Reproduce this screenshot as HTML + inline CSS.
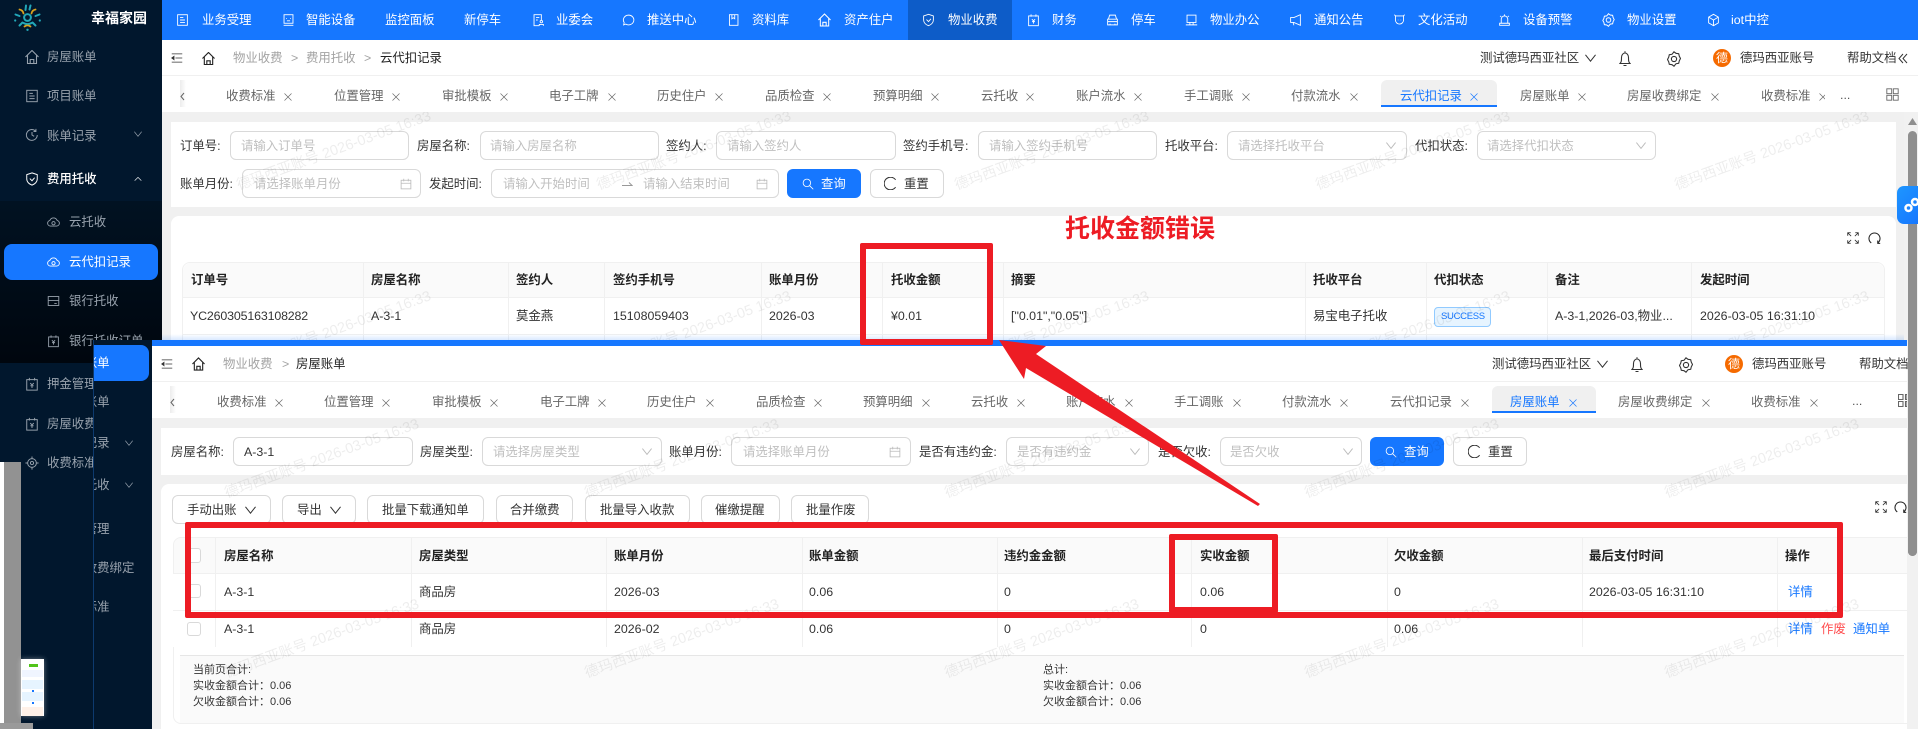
<!DOCTYPE html>
<html lang="zh"><head><meta charset="utf-8"><title>云代扣记录</title>
<style>
html,body{margin:0;padding:0;background:#fff;width:1918px;height:729px;overflow:hidden}
#r{position:relative;width:1918px;height:729px;overflow:hidden;background:#fff;font-family:"Liberation Sans","Noto Sans CJK SC",sans-serif;font-size:12.4px;color:#333}
i{position:absolute;font-style:normal;white-space:nowrap;line-height:16px}
.b{position:absolute;box-sizing:border-box}
.in{position:absolute;box-sizing:border-box;border:1px solid #d9d9d9;border-radius:6px;background:transparent;height:29px}
.bt{position:absolute;box-sizing:border-box;border:1px solid #d9d9d9;border-radius:6px;background:#fff;height:29px}
.pri{position:absolute;border-radius:6px;background:#1677ff;height:29px}
.ph i{color:#bfbfbf}
.h i{font-weight:700;color:#222}
.v{position:absolute;width:1px;background:#f0f0f0}
.ln{position:absolute;height:1px;background:#f0f0f0}
.red{position:absolute;box-sizing:border-box;border:6px solid #ed1c24;border-radius:2px}
.wm{position:absolute;white-space:nowrap;font-size:14.5px;line-height:18px;color:rgba(0,0,0,.07);transform:translate(-50%,-50%) rotate(-20deg)}
svg.ic{position:absolute;fill:none;stroke:currentColor;stroke-width:1.1;overflow:visible}
.g{color:#98a2ad}.g i{color:#98a2ad}
.tx{color:#666}.tx svg{width:8px;height:8px;color:#666;stroke-width:1.4}
.nv{color:#fff}.nv i{color:#fff}.nv svg{width:13px;height:14px;top:13px;color:#fff}
</style></head><body><div id="r">
<svg width="0" height="0" style="position:absolute"><defs>
<symbol id="home" viewBox="1 1 14 14"><path d="M1.500 8L8 1.500 14.500 8M3.500 6.500V14.500h9V6.500M6.200 14.500v-4h3.600v4"/></symbol>
<symbol id="menu" viewBox="0 1 16 14"><path d="M1 2.500h14M6 8h9M1 13.500h14"/><path d="M1 8l3-2.200v4.400z" fill="currentColor"/></symbol>
<symbol id="cal" viewBox="0 0 16 16"><rect x="1.500" y="3" width="13" height="11.500"/><path d="M1.500 7h13M5 1v3.500M11 1v3.500"/></symbol>
<symbol id="chev" viewBox="2 4.500 12 8"><path d="M2.500 5L8 12l5.500-7"/></symbol>
<symbol id="up" viewBox="2 5 12 7"><path d="M3 11l5-5 5 5"/></symbol>
<symbol id="x" viewBox="0 0 16 16"><path d="M1 1l14 14M15 1L1 15"/></symbol>
<symbol id="search" viewBox="0 0 16 16"><circle cx="6.500" cy="6.500" r="5"/><path d="M10.200 10.200L15 15"/></symbol>
<symbol id="reload" viewBox="1 1 14 14"><path d="M13.500 4A6.800 6.800 0 1 0 13.500 12"/></symbol>
<symbol id="bell" viewBox="2.500 .5 11 15"><path d="M3 13h10c-1.500-1.500-1.500-3-1.500-6a3.500 4.500 0 0 0-7 0c0 3 0 4.500-1.500 6zM8 .8v1.400M6.500 15h3"/></symbol>
<symbol id="gear" viewBox="1 0 14 16"><path d="M8 .8l2 1.500 2.700.4.600 2.500 1.200 2.300-1.200 2.300-.6 2.500-2.700.4L8 15.200l-2-1.500-2.700-.4-.6-2.500L1.500 8.500l1.200-2.300.6-2.500 2.700-.4z"/><circle cx="8" cy="8" r="2.600"/></symbol>
<symbol id="doc" viewBox="0 0 16 16"><rect x="2" y="1.500" width="12" height="13"/><path d="M5 5h4M5 8h6M5 11h6"/></symbol>
<symbol id="bill" viewBox="0 0 16 16"><rect x="2" y="3" width="12" height="12"/><path d="M5 1v3M11 1v3M6 7l2 2 2-2M8 9v3.500M6.200 10h3.600"/></symbol>
<symbol id="clock" viewBox="0 0 16 16"><path d="M14 8a6.200 6.200 0 1 1-2-4.600M8 4.500V8l2.500 1.500M12.500 1v3h-2.800"/></symbol>
<symbol id="shield" viewBox="0 0 16 16"><path d="M8 1l6 2v5c0 3.500-3 6-6 7-3-1-6-3.500-6-7V3zM5.500 7.500l2.500 2.500 3-3.500"/></symbol>
<symbol id="cloud" viewBox="0 0 16 16"><path d="M4 13a3.500 3.500 0 0 1-.5-6.900 4.800 4.800 0 0 1 9 0A3.500 3.500 0 0 1 12 13z"/><circle cx="8" cy="9.500" r="2"/></symbol>
<symbol id="card" viewBox="0 0 16 16"><rect x="1.500" y="2.500" width="13" height="11"/><path d="M1.500 7.500h13M9 11h3"/></symbol>
<symbol id="target" viewBox="0 0 16 16"><circle cx="8" cy="8" r="5"/><circle cx="8" cy="8" r="1.800"/><path d="M8 .5V3M8 13v2.500M.5 8H3M13 8h2.500"/></symbol>
<symbol id="face" viewBox="0 0 16 16"><rect x="2.500" y="1.500" width="11" height="10.500"/><path d="M5.500 5.500v1M10.500 5.500v1M6 9h4M2 14.500h12"/></symbol>
<symbol id="ppl" viewBox="0 0 16 16"><path d="M9 15H2.500V1.500h9V8M5 5h4M5 8h2"/><circle cx="11.500" cy="10" r="1.500"/><path d="M9 15v-1.500h5V15"/></symbol>
<symbol id="msg" viewBox="0 0 16 16"><path d="M8 2a6.500 6 0 1 1-3.500 11L2 14l.7-2.800A6.500 6 0 0 1 8 2z"/><path d="M5.500 8h0M8 8h0M10.500 8h0"/></symbol>
<symbol id="book" viewBox="0 0 16 16"><path d="M3 1.500h10.500v13H3zM6 1.500v5l1.800-1.200L9.500 6.500v-5"/></symbol>
<symbol id="car" viewBox="0 0 16 16"><path d="M3 7l1.500-5h7L13 7M2 7h12v7H2zM2 10h12M5 14v-1.500M11 14v-1.500"/></symbol>
<symbol id="pc" viewBox="0 0 16 16"><rect x="2.500" y="2" width="11" height="9"/><path d="M1 14h14M6 11v3M10 11v3"/></symbol>
<symbol id="horn" viewBox="0 0 16 16"><path d="M14 1.500v13L6 11H2V5h4zM5 11l1 3.500"/></symbol>
<symbol id="cup" viewBox="0 0 16 16"><path d="M3 3h10v5a5 5 0 0 1-10 0zM1.500 1.500l2 1.500M14.500 1.500l-2 1.500M6 8h.5M9.500 8h.5"/></symbol>
<symbol id="alarm" viewBox="0 0 16 16"><path d="M4 12V7a4 4 0 0 1 8 0v5M2 12h12v2.500H2zM8 1v1.500M2.500 3l1.500 1M13.500 3L12 4"/></symbol>
<symbol id="cube" viewBox="0 0 16 16"><path d="M8 1l6 3.500v7L8 15l-6-3.500v-7zM2 4.500L8 8l6-3.500M8 8v7"/></symbol>
<symbol id="grid" viewBox="0 0 16 16"><rect x="1" y="1" width="6" height="6"/><rect x="9" y="1" width="6" height="6"/><rect x="1" y="9" width="6" height="6"/><rect x="9" y="9" width="6" height="6"/></symbol>
<symbol id="exp" viewBox="0 0 16 16"><path d="M1 1l4.500 4.500M1 5V1h4M15 1l-4.500 4.500M15 5V1h-4M1 15l4.500-4.500M1 11v4h4M15 15l-4.500-4.500M15 11v4h-4"/></symbol>
<symbol id="rot" viewBox="0 0 16 16"><path d="M4 13.500a6.800 6.800 0 1 1 8 0M12 10.500v3.500h3"/></symbol>
</defs></svg>

<!-- TOP PAGE: sidebar -->
<div class="b" style="left:0;top:0;width:162px;height:729px;background:#01172d"></div>
<div class="b" style="left:0;top:201px;width:162px;height:162px;background:linear-gradient(#011222,#00060e)"></div>

<!-- left residue -->
<div class="b" style="left:0;top:462px;width:4px;height:262px;background:#fff"></div>
<div class="b" style="left:4px;top:462px;width:17px;height:267px;background:#929292"></div>
<div class="b" style="left:0;top:723px;width:33px;height:6px;background:#9a9a9a"></div>
<div class="b" style="left:21px;top:659px;width:23px;height:57px;background:#fff;box-shadow:0 0 5px rgba(255,255,255,.4)"></div>
<div class="b" style="left:29px;top:664px;width:9px;height:3px;background:#52c41a"></div>
<div class="b" style="left:22px;top:670px;width:21px;height:7px;background:#f0f5ff"></div>
<div class="b" style="left:22px;top:680px;width:21px;height:9px;background:#e6f4ff"></div>
<div class="b" style="left:22px;top:692px;width:21px;height:9px;background:#e6f4ff"></div>
<div class="b" style="left:22px;top:707px;width:21px;height:9px;background:#fff1e8"></div>
<div class="b" style="left:32px;top:690px;width:2px;height:2px;background:#1677ff"></div>
<div class="b" style="left:32px;top:702px;width:2px;height:2px;background:#1677ff"></div>

<svg style="position:absolute;left:14px;top:4px" width="27" height="27" viewBox="-13.500 -13.500 27 27" fill="none" stroke-linecap="round">
<circle r="3.400" stroke="#22a7b8" stroke-width="2"/>
<g stroke="#22a7b8" stroke-width="2"><path d="M-1.500-12L-2-7.500M3-12L2-8M-12-3l4 1.500M12-3l-4 1.500M-8 8l3-3M8 8l-3-3M-4 5.500a8 8 0 0 0 8 0"/></g>
<g stroke="#d8a21f" stroke-width="1.800"><path d="M-8-8a5 5 0 0 1 4 4M8-8a5 5 0 0 0-4 4M-3 9a5 5 0 0 1 6 0"/></g>
<circle cy="12.300" r="1.200" fill="#22a7b8"/><circle cx="-12.300" cy="3" r="1.100" fill="#22a7b8"/><circle cx="12.300" cy="3" r="1.100" fill="#22a7b8"/>
</svg>
<i style="left:91px;top:10px;font-size:14px;font-weight:700;color:#fff">幸福家园</i>
<div class="g">
<svg class="ic" style="left:25px;top:50px;width:14px;height:14px"><use href="#home"/></svg><i style="left:47px;top:49px">房屋账单</i>
<svg class="ic" style="left:25px;top:89px;width:14px;height:14px"><use href="#doc"/></svg><i style="left:47px;top:88px">项目账单</i>
<svg class="ic" style="left:25px;top:128px;width:14px;height:14px"><use href="#clock"/></svg><i style="left:47px;top:128px">账单记录</i>
<svg class="ic" style="left:134px;top:131px;width:8px;height:6px"><use href="#chev"/></svg>
<svg class="ic" style="left:47px;top:215px;width:13px;height:14px"><use href="#cloud"/></svg><i style="left:69px;top:214px">云托收</i>
<svg class="ic" style="left:47px;top:294px;width:13px;height:14px"><use href="#card"/></svg><i style="left:69px;top:293px">银行托收</i>
<svg class="ic" style="left:47px;top:334px;width:13px;height:14px"><use href="#bill"/></svg><i style="left:69px;top:333px">银行托收订单</i>
<svg class="ic" style="left:25px;top:377px;width:14px;height:14px"><use href="#bill"/></svg><i style="left:47px;top:376px">押金管理</i>
<svg class="ic" style="left:25px;top:417px;width:14px;height:14px"><use href="#bill"/></svg><i style="left:47px;top:416px">房屋收费绑定</i>
<svg class="ic" style="left:25px;top:456px;width:14px;height:14px"><use href="#target"/></svg><i style="left:47px;top:455px">收费标准</i>
</div>
<svg class="ic" style="left:25px;top:172px;width:14px;height:14px;color:#fff"><use href="#shield"/></svg><i style="left:47px;top:171px;color:#fff;font-weight:500">费用托收</i>
<svg class="ic" style="left:134px;top:176px;width:8px;height:6px;color:#dfe3e7"><use href="#up"/></svg>
<div class="b" style="left:4px;top:244px;width:154px;height:36px;background:#1677ff;border-radius:8px"></div>
<svg class="ic" style="left:47px;top:255px;width:13px;height:14px;color:#fff"><use href="#cloud"/></svg><i style="left:69px;top:254px;color:#fff">云代扣记录</i>

<!-- TOP nav -->
<div class="b" style="left:162px;top:0;width:1756px;height:40px;background:#1677ff"></div>
<div class="b" style="left:908px;top:0;width:104px;height:40px;background:#0d5cc8"></div>
<div class="nv">
<svg class="ic" style="left:176px"><use href="#doc"/></svg><i style="left:202px;top:12px">业务受理</i>
<svg class="ic" style="left:282px"><use href="#face"/></svg><i style="left:306px;top:12px">智能设备</i>
<i style="left:385px;top:12px">监控面板</i>
<i style="left:464px;top:12px">新停车</i>
<svg class="ic" style="left:532px"><use href="#ppl"/></svg><i style="left:556px;top:12px">业委会</i>
<svg class="ic" style="left:622px"><use href="#msg"/></svg><i style="left:647px;top:12px">推送中心</i>
<svg class="ic" style="left:727px"><use href="#book"/></svg><i style="left:752px;top:12px">资料库</i>
<svg class="ic" style="left:818px"><use href="#home"/></svg><i style="left:844px;top:12px">资产住户</i>
<svg class="ic" style="left:922px"><use href="#shield"/></svg><i style="left:948px;top:12px">物业收费</i>
<svg class="ic" style="left:1027px"><use href="#bill"/></svg><i style="left:1052px;top:12px">财务</i>
<svg class="ic" style="left:1106px"><use href="#car"/></svg><i style="left:1131px;top:12px">停车</i>
<svg class="ic" style="left:1185px"><use href="#pc"/></svg><i style="left:1210px;top:12px">物业办公</i>
<svg class="ic" style="left:1289px"><use href="#horn"/></svg><i style="left:1314px;top:12px">通知公告</i>
<svg class="ic" style="left:1393px"><use href="#cup"/></svg><i style="left:1418px;top:12px">文化活动</i>
<svg class="ic" style="left:1498px"><use href="#alarm"/></svg><i style="left:1523px;top:12px">设备预警</i>
<svg class="ic" style="left:1602px"><use href="#gear"/></svg><i style="left:1627px;top:12px">物业设置</i>
<svg class="ic" style="left:1707px"><use href="#cube"/></svg><i style="left:1731px;top:12px">iot中控</i>
</div>

<!-- TOP breadcrumb -->
<div class="ln" style="left:162px;top:75px;width:1756px"></div>
<svg class="ic" style="left:171px;top:52px;width:12px;height:12px;color:#333"><use href="#menu"/></svg>
<svg class="ic" style="left:202px;top:52px;width:13px;height:13px;color:#222;stroke-width:1.200"><use href="#home"/></svg>
<i style="left:233px;top:50px;color:#a3a3a3">物业收费</i><i style="left:291px;top:50px;color:#a3a3a3">&gt;</i><i style="left:306px;top:50px;color:#a3a3a3">费用托收</i><i style="left:364px;top:50px;color:#a3a3a3">&gt;</i><i style="left:380px;top:50px;color:#222">云代扣记录</i>
<i style="left:1480px;top:50px">测试德玛西亚社区</i>
<svg class="ic" style="left:1585px;top:54px;width:11px;height:8px;color:#333"><use href="#chev"/></svg>
<svg class="ic" style="left:1619px;top:51px;width:12px;height:15px;color:#333"><use href="#bell"/></svg>
<svg class="ic" style="left:1667px;top:51px;width:14px;height:16px;color:#333"><use href="#gear"/></svg>
<div class="b" style="left:1713px;top:49px;width:18px;height:18px;border-radius:50%;background:#f56a00"></div><i style="left:1716px;top:50px;color:#fff;font-size:12px">德</i>
<i style="left:1740px;top:50px">德玛西亚账号</i><i style="left:1847px;top:50px">帮助文档</i>
<svg style="position:absolute;left:1898px;top:53px" width="10" height="11" fill="none" stroke="#333"><path d="M5 1L1 5.500 5 10M9 1L5 5.500 9 10"/></svg>

<!-- TOP tabs -->
<div class="b" style="left:180px;top:80px;width:6px;height:27px;background:linear-gradient(90deg,#ececec,#fff)"></div>
<svg style="position:absolute;left:180px;top:92px" width="5" height="9" fill="none" stroke="#666"><path d="M4 1L1 4.500 4 8"/></svg>
<div class="b" style="left:1381px;top:80px;width:116px;height:27px;background:#f0f0f0;border-bottom:2px solid #1677ff;border-radius:6px 6px 0 0"></div>
<div class="tx">
<i style="left:226px;top:88px">收费标准</i><svg class="ic" style="left:284px;top:93px"><use href="#x"/></svg>
<i style="left:334px;top:88px">位置管理</i><svg class="ic" style="left:392px;top:93px"><use href="#x"/></svg>
<i style="left:442px;top:88px">审批模板</i><svg class="ic" style="left:500px;top:93px"><use href="#x"/></svg>
<i style="left:549px;top:88px">电子工牌</i><svg class="ic" style="left:608px;top:93px"><use href="#x"/></svg>
<i style="left:657px;top:88px">历史住户</i><svg class="ic" style="left:715px;top:93px"><use href="#x"/></svg>
<i style="left:765px;top:88px">品质检查</i><svg class="ic" style="left:823px;top:93px"><use href="#x"/></svg>
<i style="left:873px;top:88px">预算明细</i><svg class="ic" style="left:931px;top:93px"><use href="#x"/></svg>
<i style="left:981px;top:88px">云托收</i><svg class="ic" style="left:1026px;top:93px"><use href="#x"/></svg>
<i style="left:1076px;top:88px">账户流水</i><svg class="ic" style="left:1134px;top:93px"><use href="#x"/></svg>
<i style="left:1184px;top:88px">手工调账</i><svg class="ic" style="left:1242px;top:93px"><use href="#x"/></svg>
<i style="left:1291px;top:88px">付款流水</i><svg class="ic" style="left:1350px;top:93px"><use href="#x"/></svg>
<i style="left:1520px;top:88px">房屋账单</i><svg class="ic" style="left:1578px;top:93px"><use href="#x"/></svg>
<i style="left:1627px;top:88px">房屋收费绑定</i><svg class="ic" style="left:1711px;top:93px"><use href="#x"/></svg>
<i style="left:1761px;top:88px">收费标准</i><svg class="ic" style="left:1819px;top:93px"><use href="#x"/></svg>
</div>
<i style="left:1400px;top:88px;color:#1677ff">云代扣记录</i><svg class="ic" style="left:1470px;top:93px;width:8px;height:8px;color:#1677ff;stroke-width:1.400"><use href="#x"/></svg>
<div class="b" style="left:1825px;top:76px;width:93px;height:36px;background:#fff"></div>
<i style="left:1840px;top:87px;color:#555">...</i>
<svg class="ic" style="left:1886px;top:88px;width:13px;height:13px;color:#666"><use href="#grid"/></svg>

<!-- TOP content -->
<div class="b" style="left:162px;top:112px;width:1756px;height:228px;background:#f0f0f0"></div>
<div class="b" style="left:171px;top:122px;width:1725px;height:85px;background:#fff"></div>
<div class="b" style="left:171px;top:216px;width:1725px;height:124px;background:#fff;border-radius:8px 8px 0 0"></div>
<i style="left:180px;top:138px">订单号:</i><div class="in" style="left:230px;top:131px;width:179px"></div>
<i style="left:417px;top:138px">房屋名称:</i><div class="in" style="left:480px;top:131px;width:179px"></div>
<i style="left:666px;top:138px">签约人:</i><div class="in" style="left:716px;top:131px;width:180px"></div>
<i style="left:903px;top:138px">签约手机号:</i><div class="in" style="left:978px;top:131px;width:179px"></div>
<i style="left:1165px;top:138px">托收平台:</i><div class="in" style="left:1227px;top:131px;width:180px"></div>
<i style="left:1415px;top:138px">代扣状态:</i><div class="in" style="left:1477px;top:131px;width:179px"></div>
<i style="left:180px;top:176px">账单月份:</i><div class="in" style="left:242px;top:169px;width:179px"></div>
<i style="left:429px;top:176px">发起时间:</i><div class="in" style="left:491px;top:169px;width:288px"></div>
<div class="ph">
<i style="left:241px;top:138px">请输入订单号</i><i style="left:490px;top:138px">请输入房屋名称</i><i style="left:727px;top:138px">请输入签约人</i><i style="left:989px;top:138px">请输入签约手机号</i><i style="left:1238px;top:138px">请选择托收平台</i><i style="left:1487px;top:138px">请选择代扣状态</i>
<i style="left:254px;top:176px">请选择账单月份</i><i style="left:503px;top:176px">请输入开始时间</i><i style="left:643px;top:176px">请输入结束时间</i>
</div>
<svg class="ic" style="left:1386px;top:142px;width:10px;height:7px;color:#bbb"><use href="#chev"/></svg>
<svg class="ic" style="left:1636px;top:142px;width:10px;height:7px;color:#bbb"><use href="#chev"/></svg>
<svg class="ic" style="left:400px;top:178px;width:12px;height:12px;color:#bbb"><use href="#cal"/></svg>
<svg class="ic" style="left:756px;top:178px;width:12px;height:12px;color:#bbb"><use href="#cal"/></svg>
<svg style="position:absolute;left:622px;top:181px" width="11" height="6" fill="none" stroke="#999"><path d="M0 4.500h10L7 1.500"/></svg>
<div class="pri" style="left:787px;top:169px;width:74px"></div>
<svg class="ic" style="left:802px;top:178px;width:12px;height:12px;color:#fff"><use href="#search"/></svg><i style="left:821px;top:176px;color:#fff">查询</i>
<div class="bt" style="left:870px;top:169px;width:74px"></div>
<svg class="ic" style="left:884px;top:177px;width:13px;height:13px;color:#333"><use href="#reload"/></svg><i style="left:904px;top:176px">重置</i>
<svg class="ic" style="left:1847px;top:232px;width:12px;height:12px;color:#222"><use href="#exp"/></svg>
<svg class="ic" style="left:1868px;top:232px;width:13px;height:13px;color:#222;stroke-width:1.300"><use href="#rot"/></svg>

<div class="b" style="left:182px;top:262px;width:1703px;height:78px;border:1px solid #f0f0f0;border-bottom:0;border-radius:8px 8px 0 0"></div>
<div class="b" style="left:183px;top:263px;width:1701px;height:34px;background:#fafafa;border-radius:8px 8px 0 0"></div>
<div class="ln" style="left:182px;top:297px;width:1703px"></div><div class="ln" style="left:182px;top:334px;width:1703px"></div>
<div class="v" style="left:363px;top:262px;height:78px"></div><div class="v" style="left:508px;top:262px;height:78px"></div><div class="v" style="left:604px;top:262px;height:78px"></div><div class="v" style="left:761px;top:262px;height:78px"></div><div class="v" style="left:882px;top:262px;height:78px"></div><div class="v" style="left:1003px;top:262px;height:78px"></div><div class="v" style="left:1305px;top:262px;height:78px"></div><div class="v" style="left:1426px;top:262px;height:78px"></div><div class="v" style="left:1547px;top:262px;height:78px"></div><div class="v" style="left:1691px;top:262px;height:78px"></div>
<div class="h">
<i style="left:191px;top:272px">订单号</i><i style="left:371px;top:272px">房屋名称</i><i style="left:516px;top:272px">签约人</i><i style="left:613px;top:272px">签约手机号</i><i style="left:769px;top:272px">账单月份</i><i style="left:891px;top:272px">托收金额</i><i style="left:1011px;top:272px">摘要</i><i style="left:1313px;top:272px">托收平台</i><i style="left:1434px;top:272px">代扣状态</i><i style="left:1555px;top:272px">备注</i><i style="left:1700px;top:272px">发起时间</i>
</div>
<i style="left:190px;top:308px;letter-spacing:-.15px">YC260305163108282</i><i style="left:371px;top:308px">A-3-1</i><i style="left:516px;top:308px">莫金燕</i><i style="left:613px;top:308px">15108059403</i><i style="left:769px;top:308px">2026-03</i><i style="left:891px;top:308px">¥0.01</i><i style="left:1011px;top:308px">["0.01","0.05"]</i><i style="left:1313px;top:308px">易宝电子托收</i>
<div class="b" style="left:1434px;top:307px;width:57px;height:20px;background:#e6f4ff;border:1px solid #91caff;border-radius:4px"></div><i style="left:1441px;top:309px;color:#1677ff;font-size:9.500px;letter-spacing:-.3px">SUCCESS</i>
<i style="left:1555px;top:308px">A-3-1,2026-03,物业...</i><i style="left:1700px;top:308px">2026-03-05 16:31:10</i>
<div class="b" style="left:162px;top:334px;width:1745px;height:6px;background:linear-gradient(rgba(22,119,255,0),rgba(22,119,255,.16))"></div>

<!-- top watermarks -->
<div style="position:absolute;left:162px;top:112px;width:1745px;height:228px;overflow:hidden">
<span class="wm" style="left:172px;top:39px">德玛西亚账号 2026-03-05 16:33</span><span class="wm" style="left:532px;top:39px">德玛西亚账号 2026-03-05 16:33</span><span class="wm" style="left:890px;top:39px">德玛西亚账号 2026-03-05 16:33</span><span class="wm" style="left:1251px;top:39px">德玛西亚账号 2026-03-05 16:33</span><span class="wm" style="left:1610px;top:39px">德玛西亚账号 2026-03-05 16:33</span>
<span class="wm" style="left:172px;top:219px">德玛西亚账号 2026-03-05 16:33</span><span class="wm" style="left:532px;top:219px">德玛西亚账号 2026-03-05 16:33</span><span class="wm" style="left:890px;top:219px">德玛西亚账号 2026-03-05 16:33</span><span class="wm" style="left:1251px;top:219px">德玛西亚账号 2026-03-05 16:33</span><span class="wm" style="left:1610px;top:219px">德玛西亚账号 2026-03-05 16:33</span>
</div>

<!-- scrollbar -->
<div class="b" style="left:1904px;top:112px;width:14px;height:617px;background:#f1f1f1"></div>
<svg style="position:absolute;left:1908px;top:118px" width="9" height="7"><path d="M4.500 0L9 7H0z" fill="#8f8f8f"/></svg>
<div class="b" style="left:1908px;top:131px;width:9px;height:425px;background:#8f8f8f;border-radius:5px"></div>

<!-- SECOND PAGE -->
<div class="b" style="left:152px;top:340px;width:1755px;height:389px;background:#fff"></div>
<div class="b" style="left:93px;top:340px;width:59px;height:389px;background:#01172d;overflow:hidden;border-left:1px solid #0d3a6e">
<div class="b" style="left:-90px;top:5px;width:145px;height:36px;background:#1677ff;border-radius:8px"></div>
<i style="left:-34px;top:15px;color:#fff">房屋账单</i>
<div class="g">
<i style="left:-34px;top:54px">项目账单</i><i style="left:-34px;top:95px">账单记录</i>
<svg class="ic" style="left:31px;top:100px;width:8px;height:6px"><use href="#chev"/></svg>
<i style="left:-34px;top:137px">费用托收</i>
<svg class="ic" style="left:31px;top:142px;width:8px;height:6px"><use href="#chev"/></svg>
<i style="left:-34px;top:181px">押金管理</i><i style="left:-34px;top:220px">房屋收费绑定</i><i style="left:-34px;top:259px">收费标准</i>
</div></div>
<div class="b" style="left:152px;top:340px;width:1755px;height:6px;background:#1677ff"></div>
<svg class="ic" style="left:161px;top:358px;width:12px;height:12px;color:#333"><use href="#menu"/></svg>
<svg class="ic" style="left:192px;top:357px;width:13px;height:14px;color:#222;stroke-width:1.200"><use href="#home"/></svg>
<i style="left:223px;top:356px;color:#a3a3a3">物业收费</i><i style="left:282px;top:356px;color:#a3a3a3">&gt;</i><i style="left:296px;top:356px;color:#222">房屋账单</i>
<i style="left:1492px;top:356px">测试德玛西亚社区</i>
<svg class="ic" style="left:1597px;top:360px;width:11px;height:8px;color:#333"><use href="#chev"/></svg>
<svg class="ic" style="left:1631px;top:357px;width:12px;height:15px;color:#333"><use href="#bell"/></svg>
<svg class="ic" style="left:1679px;top:357px;width:14px;height:16px;color:#333"><use href="#gear"/></svg>
<div class="b" style="left:1725px;top:355px;width:18px;height:18px;border-radius:50%;background:#f56a00"></div><i style="left:1728px;top:356px;color:#fff;font-size:12px">德</i>
<i style="left:1752px;top:356px">德玛西亚账号</i><i style="left:1859px;top:356px">帮助文档</i>
<div class="ln" style="left:152px;top:381px;width:1755px"></div>

<div class="b" style="left:170px;top:386px;width:6px;height:27px;background:linear-gradient(90deg,#ececec,#fff)"></div>
<svg style="position:absolute;left:170px;top:398px" width="5" height="9" fill="none" stroke="#666"><path d="M4 1L1 4.500 4 8"/></svg>
<div class="b" style="left:1492px;top:386px;width:104px;height:27px;background:#f0f0f0;border-bottom:2px solid #1677ff;border-radius:6px 6px 0 0"></div>
<div class="tx">
<i style="left:217px;top:394px">收费标准</i><svg class="ic" style="left:275px;top:399px"><use href="#x"/></svg>
<i style="left:324px;top:394px">位置管理</i><svg class="ic" style="left:382px;top:399px"><use href="#x"/></svg>
<i style="left:432px;top:394px">审批模板</i><svg class="ic" style="left:490px;top:399px"><use href="#x"/></svg>
<i style="left:540px;top:394px">电子工牌</i><svg class="ic" style="left:598px;top:399px"><use href="#x"/></svg>
<i style="left:647px;top:394px">历史住户</i><svg class="ic" style="left:706px;top:399px"><use href="#x"/></svg>
<i style="left:756px;top:394px">品质检查</i><svg class="ic" style="left:814px;top:399px"><use href="#x"/></svg>
<i style="left:863px;top:394px">预算明细</i><svg class="ic" style="left:922px;top:399px"><use href="#x"/></svg>
<i style="left:971px;top:394px">云托收</i><svg class="ic" style="left:1017px;top:399px"><use href="#x"/></svg>
<i style="left:1066px;top:394px">账户流水</i><svg class="ic" style="left:1125px;top:399px"><use href="#x"/></svg>
<i style="left:1174px;top:394px">手工调账</i><svg class="ic" style="left:1233px;top:399px"><use href="#x"/></svg>
<i style="left:1282px;top:394px">付款流水</i><svg class="ic" style="left:1340px;top:399px"><use href="#x"/></svg>
<i style="left:1390px;top:394px">云代扣记录</i><svg class="ic" style="left:1461px;top:399px"><use href="#x"/></svg>
<i style="left:1618px;top:394px">房屋收费绑定</i><svg class="ic" style="left:1702px;top:399px"><use href="#x"/></svg>
<i style="left:1751px;top:394px">收费标准</i><svg class="ic" style="left:1810px;top:399px"><use href="#x"/></svg>
</div>
<i style="left:1510px;top:394px;color:#1677ff">房屋账单</i><svg class="ic" style="left:1569px;top:399px;width:8px;height:8px;color:#1677ff;stroke-width:1.400"><use href="#x"/></svg>
<i style="left:1852px;top:393px;color:#555">...</i>
<svg style="position:absolute;left:1898px;top:394px;color:#666;fill:none;stroke:#666;stroke-width:1.100" width="9" height="13" viewBox="0 0 9 13"><path d="M.5.500h4.500v5H.5zM.5 7.500h4.500v5H.5zM7.500.5h1.500v5H7.500zM7.500 7.500h1.500v5H7.500z"/></svg>
<div class="b" style="left:1907px;top:382px;width:1px;height:347px;background:#f1f1f1"></div>
<div class="b" style="left:1908px;top:346px;width:9px;height:210px;background:#8f8f8f;border-radius:0 0 5px 5px"></div>

<div class="b" style="left:152px;top:418px;width:1755px;height:311px;background:#f0f0f0"></div>
<div class="b" style="left:161px;top:428px;width:1746px;height:47px;background:#fff"></div>
<div class="b" style="left:161px;top:484px;width:1746px;height:245px;background:#fff;border-radius:8px 0 0 0"></div>
<i style="left:171px;top:444px">房屋名称:</i><div class="in" style="left:233px;top:437px;width:180px"></div><i style="left:244px;top:444px">A-3-1</i>
<i style="left:420px;top:444px">房屋类型:</i><div class="in" style="left:482px;top:437px;width:180px"></div>
<i style="left:669px;top:444px">账单月份:</i><div class="in" style="left:731px;top:437px;width:180px"></div>
<i style="left:919px;top:444px">是否有违约金:</i><div class="in" style="left:1006px;top:437px;width:143px"></div>
<i style="left:1158px;top:444px">是否欠收:</i><div class="in" style="left:1220px;top:437px;width:142px"></div>
<div class="ph"><i style="left:493px;top:444px">请选择房屋类型</i><i style="left:743px;top:444px">请选择账单月份</i><i style="left:1017px;top:444px">是否有违约金</i><i style="left:1230px;top:444px">是否欠收</i></div>
<svg class="ic" style="left:642px;top:448px;width:10px;height:7px;color:#bbb"><use href="#chev"/></svg>
<svg class="ic" style="left:889px;top:446px;width:12px;height:12px;color:#bbb"><use href="#cal"/></svg>
<svg class="ic" style="left:1130px;top:448px;width:10px;height:7px;color:#bbb"><use href="#chev"/></svg>
<svg class="ic" style="left:1343px;top:448px;width:10px;height:7px;color:#bbb"><use href="#chev"/></svg>
<div class="pri" style="left:1370px;top:437px;width:74px"></div>
<svg class="ic" style="left:1385px;top:446px;width:12px;height:12px;color:#fff"><use href="#search"/></svg><i style="left:1404px;top:444px;color:#fff">查询</i>
<div class="bt" style="left:1453px;top:437px;width:74px"></div>
<svg class="ic" style="left:1468px;top:445px;width:13px;height:13px;color:#333"><use href="#reload"/></svg><i style="left:1488px;top:444px">重置</i>

<div class="bt" style="left:172px;top:495px;width:99px"></div><i style="left:187px;top:502px">手动出账</i><svg class="ic" style="left:245px;top:506px;width:11px;height:8px;color:#333"><use href="#chev"/></svg>
<div class="bt" style="left:282px;top:495px;width:74px"></div><i style="left:297px;top:502px">导出</i><svg class="ic" style="left:330px;top:506px;width:11px;height:8px;color:#333"><use href="#chev"/></svg>
<div class="bt" style="left:367px;top:495px;width:117px"></div><i style="left:382px;top:502px">批量下载通知单</i>
<div class="bt" style="left:496px;top:495px;width:77px"></div><i style="left:510px;top:502px">合并缴费</i>
<div class="bt" style="left:585px;top:495px;width:105px"></div><i style="left:600px;top:502px">批量导入收款</i>
<div class="bt" style="left:701px;top:495px;width:79px"></div><i style="left:715px;top:502px">催缴提醒</i>
<div class="bt" style="left:791px;top:495px;width:78px"></div><i style="left:806px;top:502px">批量作废</i>
<svg class="ic" style="left:1875px;top:501px;width:12px;height:12px;color:#222"><use href="#exp"/></svg>
<svg style="position:absolute;left:1894px;top:501px;fill:none;stroke:#222;stroke-width:1.300" width="13" height="13" viewBox="0 0 16 16"><path d="M4 13.500a6.800 6.800 0 1 1 8 0M12 10.500v3.500h3"/></svg>

<div class="b" style="left:173px;top:537px;width:1734px;height:36px;background:#fafafa;border-top:1px solid #f0f0f0;border-left:1px solid #f0f0f0;border-radius:8px 0 0 0"></div>
<div class="ln" style="left:173px;top:573px;width:1734px"></div><div class="ln" style="left:173px;top:610px;width:1734px"></div><div class="ln" style="left:173px;top:647px;width:1734px"></div>
<div class="v" style="left:215px;top:537px;height:110px"></div><div class="v" style="left:411px;top:537px;height:110px"></div><div class="v" style="left:606px;top:537px;height:110px"></div><div class="v" style="left:802px;top:537px;height:110px"></div><div class="v" style="left:997px;top:537px;height:110px"></div><div class="v" style="left:1191px;top:537px;height:110px"></div><div class="v" style="left:1387px;top:537px;height:110px"></div><div class="v" style="left:1582px;top:537px;height:110px"></div><div class="v" style="left:1777px;top:537px;height:110px"></div>
<div class="b" style="left:173px;top:647px;width:1734px;height:77px;border:1px solid #f0f0f0;border-top:0;border-right:0;border-radius:0 0 0 8px;background:#fff"></div>
<div class="b" style="left:180px;top:655px;width:1724px;height:68px;background:#fafafa;border-top:1px solid #e6e6e6"></div>
<div class="in" style="left:187px;top:548px;width:14px;height:15px;border-radius:3px;background:#fff"></div>
<div class="in" style="left:187px;top:584px;width:14px;height:14px;border-radius:3px;background:#fff"></div>
<div class="in" style="left:187px;top:622px;width:14px;height:14px;border-radius:3px;background:#fff"></div>
<div class="h"><i style="left:224px;top:548px">房屋名称</i><i style="left:419px;top:548px">房屋类型</i><i style="left:614px;top:548px">账单月份</i><i style="left:809px;top:548px">账单金额</i><i style="left:1004px;top:548px">违约金金额</i><i style="left:1200px;top:548px">实收金额</i><i style="left:1394px;top:548px">欠收金额</i><i style="left:1589px;top:548px">最后支付时间</i><i style="left:1785px;top:548px">操作</i></div>
<i style="left:224px;top:584px">A-3-1</i><i style="left:419px;top:584px">商品房</i><i style="left:614px;top:584px">2026-03</i><i style="left:809px;top:584px">0.06</i><i style="left:1004px;top:584px">0</i><i style="left:1200px;top:584px">0.06</i><i style="left:1394px;top:584px">0</i><i style="left:1589px;top:584px">2026-03-05 16:31:10</i><i style="left:1788px;top:584px;color:#1677ff">详情</i>
<i style="left:224px;top:621px">A-3-1</i><i style="left:419px;top:621px">商品房</i><i style="left:614px;top:621px">2026-02</i><i style="left:809px;top:621px">0.06</i><i style="left:1004px;top:621px">0</i><i style="left:1200px;top:621px">0</i><i style="left:1394px;top:621px">0.06</i><i style="left:1788px;top:621px;color:#1677ff">详情</i><i style="left:1821px;top:621px;color:#ff4d4f">作废</i><i style="left:1853px;top:621px;color:#1677ff">通知单</i>
<div style="font-size:11px">
<i style="left:193px;top:662px">当前页合计:</i><i style="left:193px;top:678px">实收金额合计：0.06</i><i style="left:193px;top:694px">欠收金额合计：0.06</i>
<i style="left:1043px;top:662px">总计:</i><i style="left:1043px;top:678px">实收金额合计：0.06</i><i style="left:1043px;top:694px">欠收金额合计：0.06</i>
</div>

<!-- second watermarks -->
<div style="position:absolute;left:152px;top:346px;width:1755px;height:383px;overflow:hidden">
<span class="wm" style="left:170px;top:113px">德玛西亚账号 2026-03-05 16:33</span><span class="wm" style="left:530px;top:113px">德玛西亚账号 2026-03-05 16:33</span><span class="wm" style="left:890px;top:113px">德玛西亚账号 2026-03-05 16:33</span><span class="wm" style="left:1250px;top:113px">德玛西亚账号 2026-03-05 16:33</span><span class="wm" style="left:1610px;top:113px">德玛西亚账号 2026-03-05 16:33</span>
<span class="wm" style="left:170px;top:293px">德玛西亚账号 2026-03-05 16:33</span><span class="wm" style="left:530px;top:293px">德玛西亚账号 2026-03-05 16:33</span><span class="wm" style="left:890px;top:293px">德玛西亚账号 2026-03-05 16:33</span><span class="wm" style="left:1250px;top:293px">德玛西亚账号 2026-03-05 16:33</span><span class="wm" style="left:1610px;top:293px">德玛西亚账号 2026-03-05 16:33</span>
</div>

<!-- floating link button -->
<div class="b" style="left:1897px;top:186px;width:21px;height:38px;background:linear-gradient(135deg,#1e96ff,#1677ff);border-radius:7px 0 0 7px"></div>
<svg style="position:absolute;left:1904px;top:196px" width="14" height="19" fill="none" stroke="#fff" stroke-width="2.500"><circle cx="4.500" cy="12" r="3"/><circle cx="11" cy="6" r="3"/></svg>

<!-- annotations -->
<i style="left:1065px;top:213px;font-size:25px;line-height:32px;font-weight:700;color:#ed1c24">托收金额错误</i>
<div class="red" style="left:860px;top:243px;width:133px;height:102px"></div>
<div class="red" style="left:185px;top:522px;width:1658px;height:96px"></div>
<div class="red" style="left:1169px;top:534px;width:109px;height:79px"></div>
<svg style="position:absolute;left:0;top:0" width="1918" height="729"><polygon points="999,340 1046,346 1036,354 1260,504 1258,506 1026,368 1024,379" fill="#ed1c24"/></svg>
</div></body></html>
